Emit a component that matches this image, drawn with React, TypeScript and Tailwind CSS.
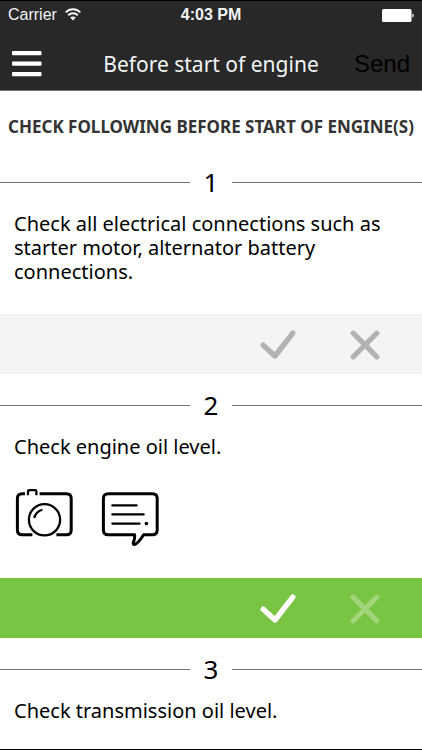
import { useState } from "react";
import clsx from "clsx";

type Answer = "ok" | "fail" | null;

interface ChecklistItem {
  id: number;
  text: string;
  answer: Answer;
}

const ITEMS: ChecklistItem[] = [
  {
    id: 1,
    text: "Check all electrical connections such as starter motor, alternator battery connections.",
    answer: null,
  },
  { id: 2, text: "Check engine oil level.", answer: "ok" },
  { id: 3, text: "Check transmission oil level.", answer: null },
];

const WifiIcon = () => (
  <svg width="16" height="14" viewBox="0 0 16 14" fill="none" stroke="currentColor" strokeWidth="2" aria-hidden="true">
    <path d="M0.7 4.4C4.7 0.2 11.3 0.2 15.3 4.4" />
    <path d="M3.2 7.3C5.9 4.6 10.1 4.6 12.8 7.3" />
    <path d="M8 12.4L5.2 9.5C6.8 8 9.2 8 10.8 9.5Z" fill="currentColor" stroke="none" />
  </svg>
);

const BatteryIcon = () => (
  <svg width="32" height="13" viewBox="0 0 32 13" fill="currentColor" aria-hidden="true">
    <rect x="0" y="0" width="29.5" height="13" rx="1.5" />
    <path d="M30.3 4.5C32.2 5.2 32.2 7.8 30.3 8.5Z" />
  </svg>
);

const MenuIcon = () => (
  <svg width="30" height="26" viewBox="0 0 30 26" fill="currentColor" aria-hidden="true">
    <rect x="0" y="0" width="29.5" height="4.3" rx="1" />
    <rect x="0" y="10.5" width="29.5" height="4.3" rx="1" />
    <rect x="0" y="21" width="29.5" height="4.3" rx="1" />
  </svg>
);

const CheckIcon = () => (
  <svg width="36" height="30" viewBox="0 0 36 30" fill="none" stroke="currentColor" strokeWidth="5.4" strokeLinecap="round" strokeLinejoin="round" aria-hidden="true">
    <path d="M3.2 15.2L15 26L32.8 3.2" />
  </svg>
);

const CrossIcon = () => (
  <svg width="30" height="30" viewBox="0 0 30 30" fill="none" stroke="currentColor" strokeWidth="5.2" strokeLinecap="round" aria-hidden="true">
    <path d="M3.2 3.2L26.8 26.8M26.8 3.2L3.2 26.8" />
  </svg>
);

const CameraIcon = () => (
  <svg width="58" height="58" viewBox="0 0 58 58" fill="none" stroke="currentColor" strokeWidth="3" aria-hidden="true">
    <path d="M10 4.7H7.4C4.2 4.7 2.4 6.4 2.4 9.4V41C2.4 44.2 4.2 45.8 7.4 45.8H17.4" />
    <path d="M24.6 4.7H51.2C54.4 4.7 56.2 6.4 56.2 9.4V41C56.2 44.2 54.4 45.8 51.2 45.8H41.4" />
    <path d="M13 6.2V2.4C13 1.5 13.4 1.2 14.4 1.2H20C21 1.2 21.4 1.5 21.4 2.4V6.2" strokeWidth="2.3" />
    <circle cx="29.5" cy="30.8" r="15.6" strokeWidth="2.3" />
    <path d="M19.2 29C20.2 25 22.8 22 27.4 20.8" strokeWidth="2.2" />
  </svg>
);

const CommentIcon = () => (
  <svg width="58" height="58" viewBox="0 0 58 58" fill="none" stroke="currentColor" strokeWidth="3" strokeLinejoin="round" aria-hidden="true">
    <path d="M33.6 45.8H7.4C4.2 45.8 2.4 44.2 2.4 41V9.4C2.4 6.4 4.2 4.7 7.4 4.7H51.2C54.4 4.7 56.2 6.4 56.2 9.4V41C56.2 44.2 54.4 45.8 51.2 45.8H42.6C40.2 49.2 38 53.4 34 55.4C32.4 55.8 32 54.8 32.4 53.4C33.2 51 34 49.4 33.6 45.8Z" />
    <path d="M11.4 16.4H35.6M11.4 25.4H42.6M11.4 34.6H38.6" strokeWidth="2.3" strokeLinecap="round" />
    <circle cx="45.4" cy="34.6" r="1.8" fill="currentColor" stroke="none" />
  </svg>
);

const StatusBar = () => (
  <div className="grid grid-cols-3 items-center h-7 px-2 font-['Liberation_Sans',sans-serif] text-base text-gray-100">
    <div className="flex items-center gap-2">
      <span>Carrier</span>
      <WifiIcon />
    </div>
    <span className="text-center font-bold">4:03 PM</span>
    <div className="flex justify-end text-white">
      <BatteryIcon />
    </div>
  </div>
);

const Header = () => (
  <header className="bg-[#282828] border-t border-t-black border-b border-b-neutral-500">
    <StatusBar />
    <div className="grid grid-cols-[60px_1fr_60px] items-center h-[61px] px-3 pt-2">
      <button type="button" aria-label="Menu" className="text-white">
        <MenuIcon />
      </button>
      <h1 className="text-center text-[21px] leading-7 text-gray-100 whitespace-nowrap">Before start of engine</h1>
      <button type="button" className="justify-self-end font-['Liberation_Sans',sans-serif] text-2xl text-black">
        Send
      </button>
    </div>
  </header>
);

const NumberDivider = ({ number }: { number: number }) => (
  <div className="flex items-center h-[30px]">
    <div className="flex-1 h-px bg-neutral-500" />
    <span className="w-[42px] text-center text-[26px] leading-[30px]">{number}</span>
    <div className="flex-1 h-px bg-neutral-500" />
  </div>
);

interface AnswerBarProps {
  answer: Answer;
  onAnswer: (answer: Answer) => void;
}

const AnswerBar = ({ answer, onAnswer }: AnswerBarProps) => {
  const color = (own: Answer) => {
    if (!answer) return "text-[#b3b3b3]";
    return answer === own ? "text-white" : "text-white/30";
  };

  return (
    <div
      className={clsx(
        "flex justify-end items-center gap-[54px] h-[60px] pt-0.5 pr-[42px]",
        !answer && "bg-[#f4f4f4]",
        answer === "ok" && "bg-[#7ac443]",
        answer === "fail" && "bg-red-500",
      )}
    >
      <button type="button" aria-label="OK" aria-pressed={answer === "ok"} className={color("ok")} onClick={() => onAnswer("ok")}>
        <CheckIcon />
      </button>
      <button type="button" aria-label="Not OK" aria-pressed={answer === "fail"} className={color("fail")} onClick={() => onAnswer("fail")}>
        <CrossIcon />
      </button>
    </div>
  );
};

export default function App() {
  const [items, setItems] = useState(ITEMS);

  const setAnswer = (id: number, answer: Answer) => {
    setItems(items.map((item) => (item.id === id ? { ...item, answer } : item)));
  };

  return (
    <div className="h-screen flex flex-col overflow-hidden bg-white border-b border-black font-['Noto_Sans',sans-serif] text-black">
      <Header />
      <main className="flex-1 min-h-0 overflow-y-auto [scrollbar-width:none]">
        <h2 className="pt-6 pb-3 text-center text-[17px] leading-6 font-bold text-[#333] whitespace-nowrap">
          CHECK FOLLOWING BEFORE START OF ENGINE(S)
        </h2>
        {items.map((item) => (
          <section key={item.id} className="pt-4">
            <NumberDivider number={item.id} />
            <p className="mt-[15px] mb-[30px] px-[14px] text-xl leading-6">{item.text}</p>
            {item.answer && (
              <div className="flex gap-7 mb-[31px] px-[15px]">
                <button type="button" aria-label="Add photo">
                  <CameraIcon />
                </button>
                <button type="button" aria-label="Add comment">
                  <CommentIcon />
                </button>
              </div>
            )}
            <AnswerBar answer={item.answer} onAnswer={(answer) => setAnswer(item.id, answer)} />
          </section>
        ))}
      </main>
    </div>
  );
}
